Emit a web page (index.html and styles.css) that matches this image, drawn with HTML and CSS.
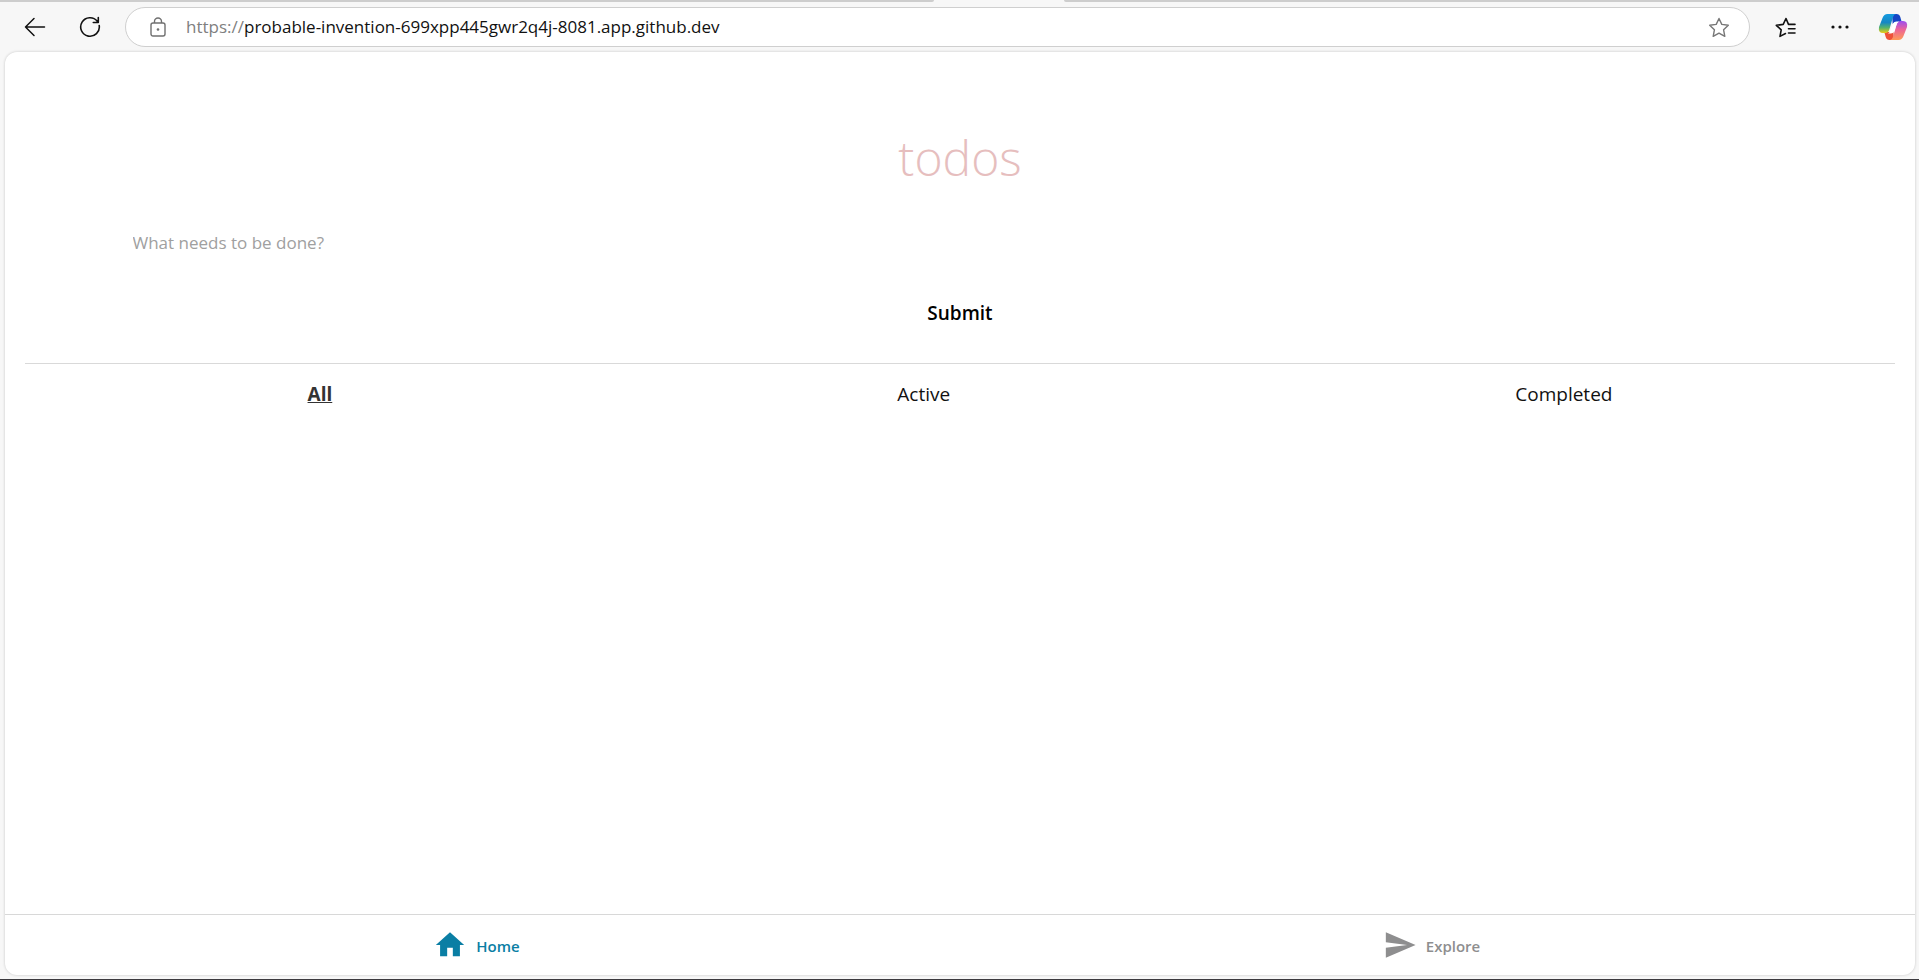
FILE: index.html
```html
<!DOCTYPE html>
<html lang="en">
<head>
<meta charset="utf-8">
<title>todos</title>
<link rel="stylesheet" href="styles.css">
</head>
<body>
<div class="window">
  <div class="tab-edge"><span class="edge-left"></span><span class="edge-gap"></span><span class="edge-right"></span></div>
  <header class="toolbar">
    <button class="tool back" aria-label="Back">
      <svg width="22" height="20" viewBox="0 0 22 20" fill="none" stroke="#111" stroke-width="1.5" stroke-linecap="round" stroke-linejoin="round"><path d="M20.500 10H1.500M10 1.500 1.500 10l8.500 8.500"/></svg>
    </button>
    <button class="tool reload" aria-label="Refresh">
      <svg width="22" height="22" viewBox="0 0 22 22" fill="none" stroke="#111" stroke-width="1.600" stroke-linecap="round" stroke-linejoin="round"><path d="M20.200 9.500A9.300 9.300 0 1 1 18.300 5.200M19.300 1.500v5h-5"/></svg>
    </button>
    <div class="address">
      <svg class="lock" width="16" height="20" viewBox="0 0 16 20" fill="none" stroke="#707070" stroke-width="1.400"><rect x="1" y="6" width="14" height="13" rx="2"/><path d="M4.500 6V4.500a3.500 3.500 0 0 1 7 0V6"/><circle cx="8" cy="12.500" r="1.300" fill="#707070" stroke="none"/></svg>
      <div class="url"><span class="scheme">https://</span>probable-invention-699xpp445gwr2q4j-8081.app.github.dev</div>
      <button class="tool" aria-label="Add to favorites">
        <svg width="22" height="21" viewBox="0 0 22 21" fill="none" stroke="#777" stroke-width="1.400" stroke-linejoin="round"><path d="m11 1.500 2.800 5.900 6.500.9-4.700 4.500 1.200 6.500L11 16.200l-5.800 3.100 1.200-6.500L1.700 8.300l6.500-.9z"/></svg>
      </button>
    </div>
    <button class="tool favorites" aria-label="Favorites">
      <svg width="22" height="21" viewBox="0 0 22 21" fill="none" stroke="#111" stroke-width="1.600" stroke-linecap="round" stroke-linejoin="round"><path d="M13.500 7.400 11 1.500 8.200 7.400l-6.900.9 4.900 4.500-1.200 6.600 5.500-2.900M13.500 7.400H20M13.500 11.700H20M13.500 16H20"/></svg>
    </button>
    <button class="tool more" aria-label="Settings and more">
      <svg width="18" height="4" viewBox="0 0 18 4" fill="#111"><circle cx="2" cy="2" r="1.600"/><circle cx="9" cy="2" r="1.600"/><circle cx="16" cy="2" r="1.600"/></svg>
    </button>
    <button class="tool copilot" aria-label="Copilot">
      <svg width="30" height="28" viewBox="0 0 30 28">
        <defs>
          <linearGradient id="cool" x1="0" y1="0" x2="0" y2="1"><stop offset="0" stop-color="#159be0"/><stop offset=".45" stop-color="#1687c4"/><stop offset=".72" stop-color="#55b36c"/><stop offset="1" stop-color="#edcb16"/></linearGradient>
          <linearGradient id="warm" x1="0" y1="0" x2="0" y2="1"><stop offset="0" stop-color="#9b4df0"/><stop offset=".45" stop-color="#ec6498"/><stop offset="1" stop-color="#ff9b55"/></linearGradient>
        </defs>
        <path d="M14 1h4.500q3 0 3.800 3l1.400 5h-5q-3 0-4 2z" fill="#1746c5"/>
        <path d="M16 27h-4.500q-3 0-3.800-3l-1.400-5h5q3 0 4-2z" fill="#ee5138"/>
        <path d="M9.500 1H18q-2 0-3 3l-3.500 12q-1 4-4 4H5q-5 0-4-6L4.500 5Q6 1 9.500 1z" fill="url(#cool)"/>
        <path d="M20.500 27H12q2 0 3-3l3.500-12q1-4 4-4H25q5 0 4 6l-3.500 9q-1.500 4-5 4z" fill="url(#warm)"/>
        <path d="M14.700 11.500q1-3 4-3h2.500q-2.200 1-3 4l-1.600 5q-1 3-4 3H10q1.700-1 2.300-3z" fill="#fff"/>
      </svg>
    </button>
  </header>
  <main class="page">
    <form class="entry">
      <h1 class="title">todos</h1>
      <input class="new-todo" type="text" aria-label="New todo" placeholder="What needs to be done?">
      <button class="submit" type="button">Submit</button>
    </form>
    <div class="filters">
      <button class="filter selected">All</button>
      <button class="filter">Active</button>
      <button class="filter">Completed</button>
    </div>
    <nav class="tabs">
      <a class="tab active" href="#home">
        <svg width="34" height="34" viewBox="0 0 24 24" fill="currentColor"><path d="M10 20v-6h4v6h5v-8h3L12 3 2 12h3v8z"/></svg>
        <span class="tab-label">Home</span>
      </a>
      <a class="tab" href="#explore">
        <svg width="34" height="34" viewBox="0 0 24 24" fill="currentColor"><path d="M2 21 23 12 2 3v7l15 2-15 2z"/></svg>
        <span class="tab-label">Explore</span>
      </a>
    </nav>
  </main>
</div>
</body>
</html>
```
FILE: styles.css
```css
* { box-sizing: border-box; }
body {
  margin: 0;
  font-family: "Open Sans", "Noto Sans", sans-serif;
  background: #f7f7f7;
}
button {
  padding: 0;
  border: 0;
  background: none;
  font: inherit;
  color: inherit;
}
svg { display: block; flex: none; }
.window {
  display: flex;
  flex-direction: column;
  height: 100vh;
  border-bottom: 1px solid #3c3a3e;
}
.tab-edge { display: flex; height: 2px; }
.edge-left { flex: 934; background: #cdcdcd; border-radius: 0 0 4px 0; }
.edge-gap { flex: 130; }
.edge-right { flex: 855; background: #cdcdcd; border-radius: 0 0 0 4px; }
.toolbar {
  display: flex;
  align-items: center;
  padding: 5px 11px 5px 24px;
}
.tool { display: flex; align-items: center; justify-content: center; }
.reload { margin: 0 24px 0 33px; }
.address {
  flex: 1;
  display: flex;
  align-items: center;
  height: 40px;
  padding: 0 19px 0 24px;
  border: 1px solid #cfcfcf;
  border-radius: 20px;
  background: #fff;
}
.url {
  flex: 1;
  margin-left: 20px;
  font-size: 17px;
  line-height: 24px;
  color: #111;
}
.scheme { color: #808080; }
.favorites { margin-left: 25px; }
.more { margin: 0 29px 0 34px; }
.page {
  flex: 1;
  display: flex;
  flex-direction: column;
  margin: 0 4px 4px 5px;
  border-radius: 12px;
  background: #fff;
  box-shadow: 0 0 3px rgba(0, 0, 0, 0.2);
}
.entry {
  display: flex;
  flex-direction: column;
  align-items: center;
  margin: 0 20px;
  padding-top: 72px;
  border-bottom: 1px solid #d9d9d9;
}
.title {
  margin: 0;
  font-size: 48px;
  line-height: 68px;
  font-weight: 300;
  color: #e6bebe;
}
.new-todo {
  width: 90%;
  height: 60px;
  margin-top: 20px;
  padding: 0 14px;
  border: 0;
  outline: 0;
  background: none;
  font-family: inherit;
  font-size: 17px;
}
.new-todo::placeholder { color: #a0a0a0; opacity: 1; }
.submit {
  margin: 26px 0 35px;
  font-size: 19px;
  line-height: 30px;
  font-weight: 600;
  color: #000;
}
.filters {
  display: flex;
  justify-content: space-around;
  flex: 1;
  align-items: flex-start;
  margin: 0 20px;
  padding-top: 16px;
}
.filter { font-size: 19px; line-height: 28px; color: #111; }
.selected { font-weight: 700; color: #333; text-decoration: underline; }
.tabs { display: flex; height: 61px; border-top: 1px solid #d8d8d8; }
.tab {
  flex: 1;
  display: flex;
  align-items: center;
  justify-content: center;
  gap: 9px;
  padding-right: 12px;
  color: #8e8e8f;
  text-decoration: none;
}
.active { color: #0a7ea4; }
.tab-label { padding-top: 1px; font-size: 15px; line-height: 20px; font-weight: 600; }
```
